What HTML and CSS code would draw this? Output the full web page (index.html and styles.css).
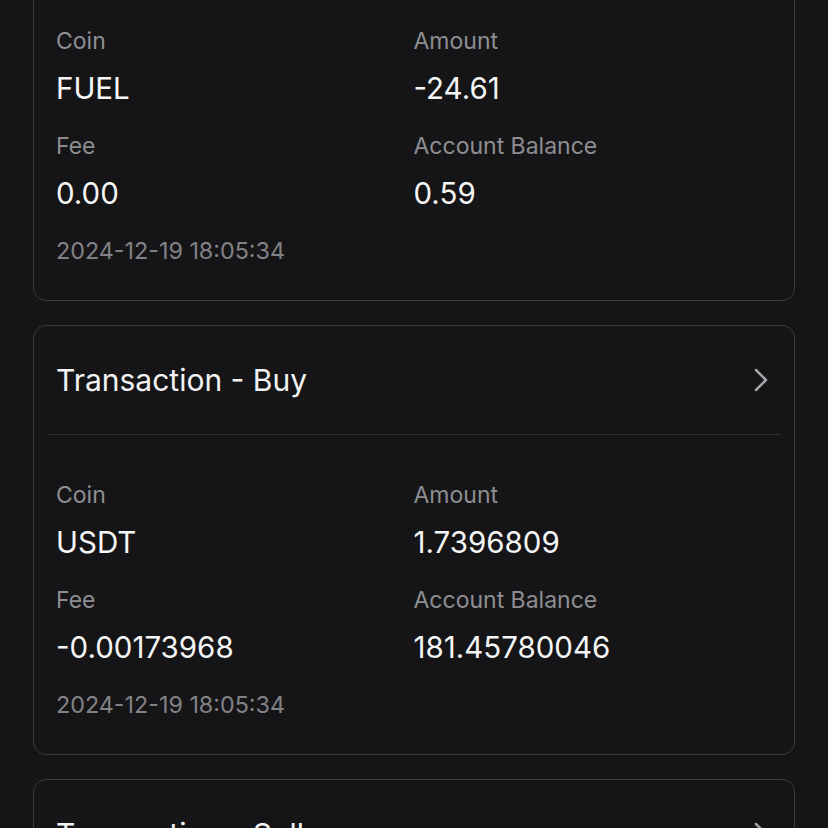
FILE: index.html
```html
<!DOCTYPE html>
<html lang="en">
<head>
<meta charset="utf-8">
<link rel="stylesheet" href="styles.css">
</head>
<body>
<div class="list">
  <section class="card">
    <div class="card-head">
      <span class="title">Transaction - Sell</span>
      <svg class="chev" width="14" height="24" viewBox="0 0 14 24"><polyline points="2,2 12,12 2,22" fill="none" stroke="#a3a3a7" stroke-width="2.5" stroke-linecap="round" stroke-linejoin="round"/></svg>
    </div>
    <div class="divider"></div>
    <div class="card-body">
      <div class="grid">
        <div class="field"><div class="label">Coin</div><div class="value">FUEL</div></div>
        <div class="field"><div class="label">Amount</div><div class="value">-24.61</div></div>
        <div class="field"><div class="label">Fee</div><div class="value">0.00</div></div>
        <div class="field"><div class="label">Account Balance</div><div class="value">0.59</div></div>
      </div>
      <div class="date">2024-12-19 18:05:34</div>
    </div>
  </section>
  <section class="card">
    <div class="card-head">
      <span class="title">Transaction - Buy</span>
      <svg class="chev" width="14" height="24" viewBox="0 0 14 24"><polyline points="2,2 12,12 2,22" fill="none" stroke="#a3a3a7" stroke-width="2.5" stroke-linecap="round" stroke-linejoin="round"/></svg>
    </div>
    <div class="divider"></div>
    <div class="card-body">
      <div class="grid">
        <div class="field"><div class="label">Coin</div><div class="value">USDT</div></div>
        <div class="field"><div class="label">Amount</div><div class="value">1.7396809</div></div>
        <div class="field"><div class="label">Fee</div><div class="value">-0.00173968</div></div>
        <div class="field"><div class="label">Account Balance</div><div class="value">181.45780046</div></div>
      </div>
      <div class="date">2024-12-19 18:05:34</div>
    </div>
  </section>
  <section class="card">
    <div class="card-head">
      <span class="title">Transaction - Sell</span>
      <svg class="chev" width="14" height="24" viewBox="0 0 14 24"><polyline points="2,2 12,12 2,22" fill="none" stroke="#a3a3a7" stroke-width="2.5" stroke-linecap="round" stroke-linejoin="round"/></svg>
    </div>
    <div class="divider"></div>
    <div class="card-body">
      <div class="grid">
        <div class="field"><div class="label">Coin</div><div class="value">FUEL</div></div>
        <div class="field"><div class="label">Amount</div><div class="value">-24.61</div></div>
      </div>
    </div>
  </section>
</div>
</body>
</html>
```
FILE: styles.css
```css
html, body {
  margin: 0;
  padding: 0;
  background: #151517;
  height: 100%;
  overflow: hidden;
}
body {
  font-family: Inter, "Noto Sans", sans-serif;
  color: #f4f4f5;
}
.list {
  display: flex;
  flex-direction: column;
  gap: 24px;
  padding: 0 33px;
  margin-top: -129px;
}
.card {
  border: 1px solid #3a3a3d;
  border-radius: 13px;
  background: #151517;
}
.card-head {
  display: flex;
  align-items: center;
  justify-content: space-between;
  padding: 34px 26px 34px 22px;
}
.title {
  font-size: 30px;
  line-height: 40px;
  color: #f2f2f3;
}
.chev {
  display: block;
}
.divider {
  height: 1px;
  background: #2e2e31;
  margin: 0 13px;
}
.card-body {
  padding: 45px 23px 34px 22px;
}
.grid {
  display: grid;
  grid-template-columns: 1fr 1fr;
  column-gap: 0;
  row-gap: 25px;
}
.field {
  display: flex;
  flex-direction: column;
  gap: 14px;
}
.label {
  font-size: 23px;
  line-height: 30px;
  color: #8e8e92;
}
.value {
  font-size: 29.5px;
  line-height: 36px;
  color: #f5f5f6;
}
.date {
  margin-top: 25px;
  font-size: 23.3px;
  line-height: 30px;
  color: #828286;
}
```
